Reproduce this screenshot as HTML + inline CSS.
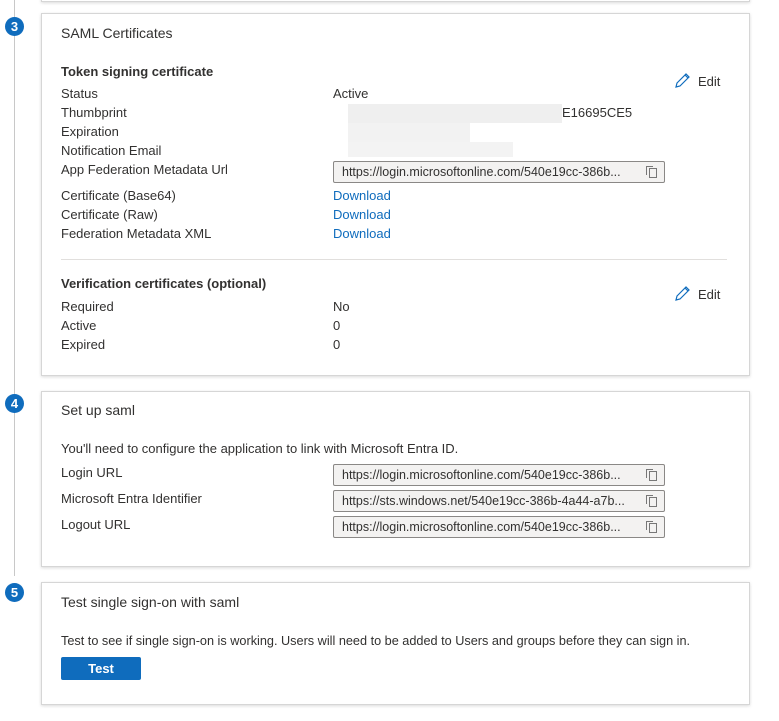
<!DOCTYPE html>
<html><head><style>
body{margin:0;width:779px;height:721px;background:#fff;font-family:"Liberation Sans",sans-serif;color:#323130;position:relative;overflow:hidden}
.a{position:absolute;white-space:nowrap;font-size:13px;line-height:16px}
.card{position:absolute;left:41px;width:707px;border:1px solid #d6d6d6;box-shadow:0 1px 3px rgba(0,0,0,.15);background:#fff}
.num{position:absolute;left:5px;width:19px;height:19px;border-radius:50%;background:#0f6cbd;color:#fff;font-weight:bold;font-size:13px;line-height:19px;text-align:center}
.inp{position:absolute;left:333px;width:332px;height:22px;border:1px solid #8a8886;background:#f3f2f1;border-radius:2px;font-size:12.5px;line-height:21px;box-sizing:border-box;padding-left:8px;white-space:nowrap}
.cp{position:absolute;right:7px;top:6px;width:6px;height:8px;border:1px solid #777}
.cp:before{content:"";position:absolute;left:-4px;top:-3px;width:6px;height:8px;border:1px solid #777;border-right:none;border-bottom:none}
.link{color:#0f6cbd}
</style></head><body>
<div style="position:absolute;left:14px;top:0;width:1px;height:576px;background:#c8c8c8"></div>
<div class="card" style="top:-10px;height:10px"></div>
<div class="num" style="top:17px">3</div>
<div class="num" style="top:394px">4</div>
<div class="num" style="top:583px">5</div>

<div class="card" style="top:13px;height:361px"></div>
<div class="a" style="left:61px;top:25px;font-size:14px">SAML Certificates</div>
<div class="a" style="left:61px;top:64px;font-weight:bold">Token signing certificate</div>
<div class="a" style="left:61px;top:86px">Status</div>
<div class="a" style="left:61px;top:105px">Thumbprint</div>
<div class="a" style="left:61px;top:124px">Expiration</div>
<div class="a" style="left:61px;top:143px">Notification Email</div>
<div class="a" style="left:61px;top:162px">App Federation Metadata Url</div>
<div class="a" style="left:61px;top:188px">Certificate (Base64)</div>
<div class="a" style="left:61px;top:207px">Certificate (Raw)</div>
<div class="a" style="left:61px;top:226px">Federation Metadata XML</div>
<div class="a" style="left:333px;top:86px">Active</div>
<div style="position:absolute;left:348px;top:104px;width:214px;height:19px;background:#efefef"></div>
<div style="position:absolute;left:348px;top:123px;width:122px;height:19px;background:#f2f2f2"></div>
<div style="position:absolute;left:348px;top:142px;width:165px;height:15px;background:#f3f3f3"></div>
<div class="a" style="left:562px;top:105px">E16695CE5</div>
<div class="inp" style="top:161px">https://login.microsoftonline.com/540e19cc-386b...<span class="cp"></span></div>
<div class="a link" style="left:333px;top:188px">Download</div>
<div class="a link" style="left:333px;top:207px">Download</div>
<div class="a link" style="left:333px;top:226px">Download</div>
<svg style="position:absolute;left:674px;top:72px" width="17" height="17" viewBox="0 0 17 17"><path d="M2 15 L3 11 L12 2 L15 5 L6 14 Z M11 3 L14 6" fill="none" stroke="#0f6cbd" stroke-width="1.2"/></svg>
<div class="a" style="left:698px;top:74px">Edit</div>
<div style="position:absolute;left:61px;top:259px;width:666px;height:1px;background:#e1dfdd"></div>
<div class="a" style="left:61px;top:276px;font-weight:bold">Verification certificates (optional)</div>
<div class="a" style="left:61px;top:299px">Required</div>
<div class="a" style="left:61px;top:318px">Active</div>
<div class="a" style="left:61px;top:337px">Expired</div>
<div class="a" style="left:333px;top:299px">No</div>
<div class="a" style="left:333px;top:318px">0</div>
<div class="a" style="left:333px;top:337px">0</div>
<svg style="position:absolute;left:674px;top:285px" width="17" height="17" viewBox="0 0 17 17"><path d="M2 15 L3 11 L12 2 L15 5 L6 14 Z M11 3 L14 6" fill="none" stroke="#0f6cbd" stroke-width="1.2"/></svg>
<div class="a" style="left:698px;top:287px">Edit</div>

<div class="card" style="top:391px;height:174px"></div>
<div class="a" style="left:61px;top:402px;font-size:14px">Set up saml</div>
<div class="a" style="left:61px;top:441px">You'll need to configure the application to link with Microsoft Entra ID.</div>
<div class="a" style="left:61px;top:465px">Login URL</div>
<div class="a" style="left:61px;top:491px">Microsoft Entra Identifier</div>
<div class="a" style="left:61px;top:517px">Logout URL</div>
<div class="inp" style="top:464px">https://login.microsoftonline.com/540e19cc-386b...<span class="cp"></span></div>
<div class="inp" style="top:490px">https://sts.windows.net/540e19cc-386b-4a44-a7b...<span class="cp"></span></div>
<div class="inp" style="top:516px">https://login.microsoftonline.com/540e19cc-386b...<span class="cp"></span></div>

<div class="card" style="top:582px;height:121px"></div>
<div class="a" style="left:61px;top:594px;font-size:14px">Test single sign-on with saml</div>
<div class="a" style="left:61px;top:633px;font-size:12.7px">Test to see if single sign-on is working. Users will need to be added to Users and groups before they can sign in.</div>
<div style="position:absolute;left:61px;top:657px;width:80px;height:23px;background:#0f6cbd;border-radius:2px;color:#fff;font-weight:bold;font-size:13px;line-height:23px;text-align:center">Test</div>
</body></html>
